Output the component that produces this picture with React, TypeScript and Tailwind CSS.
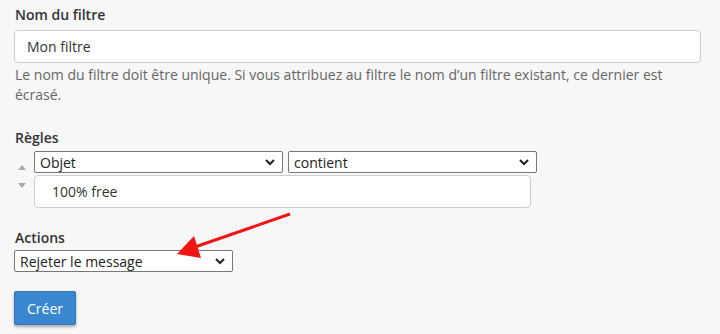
import React from "react";

const font = { fontFamily: '"Open Sans", "Liberation Sans", sans-serif' };

function Chevron() {
  return (
    <svg
      width="12"
      height="8"
      viewBox="0 0 12 8"
      className="pointer-events-none absolute right-[6px] top-1/2 -translate-y-1/2"
    >
      <path d="M2 2l4 4 4-4" fill="none" stroke="#222" strokeWidth="2" />
    </svg>
  );
}

function FakeSelect({ value, className }: { value: string; className: string }) {
  return (
    <div
      className={`relative flex h-[22px] items-center rounded-[2px] border border-[#777] bg-white pl-[5px] text-[14px] text-[#222] ${className}`}
    >
      {value}
      <Chevron />
    </div>
  );
}

export default function App() {
  return (
    <div
      className="relative h-[334px] w-[720px] overflow-hidden bg-[#f7f7f7] px-[14px] pt-[5px] text-[#333]"
      style={font}
    >
      <label className="block h-[20px] pl-[1px] text-[14px] font-semibold leading-[20px]">
        Nom du filtre
      </label>
      <div className="mt-[5px] flex h-[33px] w-[687px] items-center rounded-[4px] border border-[#ccc] bg-white pl-[12px] text-[14px]">
        Mon filtre
      </div>
      <p className="mt-[2px] pl-[1px] text-[14px] leading-[20px] text-[#666]">
        Le nom du filtre doit être unique. Si vous attribuez au filtre le nom d’un filtre existant, ce dernier est
        <br />
        écrasé.
      </p>

      <label className="mt-[23px] block h-[20px] pl-[1px] text-[14px] font-semibold leading-[20px]">
        Règles
      </label>
      <div className="mt-[3px] flex">
        <div className="flex w-[20px] flex-col items-center gap-[13px] pt-[14px] pr-[5px]">
          <span className="h-0 w-0 border-x-[4px] border-b-[5px] border-x-transparent border-b-[#aaa]" />
          <span className="h-0 w-0 border-x-[4px] border-t-[5px] border-x-transparent border-t-[#aaa]" />
        </div>
        <div className="flex flex-col gap-[2px]">
          <div className="flex gap-[5px]">
            <FakeSelect value="Objet" className="w-[249px]" />
            <FakeSelect value="contient" className="w-[249px]" />
          </div>
          <div className="flex h-[33px] w-[497px] items-center rounded-[4px] border border-[#ccc] bg-white pl-[17px] text-[14px]">
            100% free
          </div>
        </div>
      </div>

      <label className="mt-[20px] block h-[20px] pl-[1px] text-[14px] font-semibold leading-[20px]">
        Actions
      </label>
      <FakeSelect value="Rejeter le message" className="mt-[2px] w-[219px]" />

      <button className="mt-[19px] h-[34px] w-[62px] rounded-[2px] border border-[#2f76bb] bg-[#3a87d0] text-[14px] text-white shadow-[0_2px_3px_rgba(0,0,0,0.3)]">
        Créer
      </button>

      <svg
        className="pointer-events-none absolute left-0 top-0"
        width="720"
        height="334"
        viewBox="0 0 720 334"
      >
        <line x1="290" y1="214" x2="192" y2="248" stroke="#f01414" strokeWidth="3" />
        <polygon points="177,254 194,236 201,258" fill="#f01414" />
      </svg>
    </div>
  );
}
